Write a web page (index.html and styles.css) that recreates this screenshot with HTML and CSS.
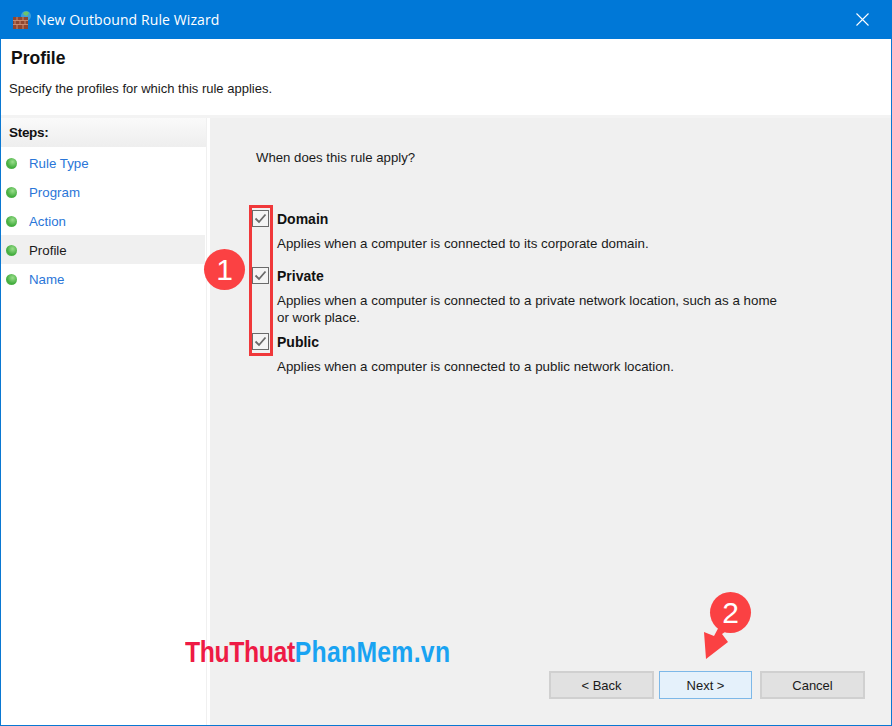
FILE: index.html
```html
<!DOCTYPE html>
<html lang="en">
<head>
<meta charset="utf-8">
<title>New Outbound Rule Wizard</title>
<link rel="stylesheet" href="styles.css">
</head>
<body>
<div class="window">
  <header class="titlebar">
    <svg class="app-icon" width="20" height="20" viewBox="0 0 20 20">
      <circle cx="14" cy="6" r="5" fill="#3f9fd8"/>
      <path d="M11 3c2-2 5-2 6 0l-2 3-3-1z" fill="#6cc46a"/>
      <rect x="1" y="7" width="15" height="12" fill="#8f4630"/>
      <path d="M1 10.5h15M1 14.5h15M5 7v3.500M11 7v3.500M3 10.500v4M8 10.500v4M13 10.500v4M5 14.500v4.500M11 14.500v4.500" stroke="#c98b6f" stroke-width="1" fill="none"/>
    </svg>
    <span class="title-text">New Outbound Rule Wizard</span>
    <svg class="close-icon" width="13" height="13" viewBox="0 0 13 13">
      <path d="M.5.5l12 12M12.500.5l-12 12" stroke="#fff" stroke-width="1.100" fill="none"/>
    </svg>
  </header>
  <section class="page-head">
    <h1 class="page-title">Profile</h1>
    <p class="page-desc">Specify the profiles for which this rule applies.</p>
  </section>
  <div class="content">
    <aside class="steps">
      <div class="steps-head">Steps:</div>
      <ul class="step-list">
        <li class="step"><span class="dot"></span><span class="step-link">Rule Type</span></li>
        <li class="step"><span class="dot"></span><span class="step-link">Program</span></li>
        <li class="step"><span class="dot"></span><span class="step-link">Action</span></li>
        <li class="step step-current"><span class="dot"></span><span>Profile</span></li>
        <li class="step"><span class="dot"></span><span class="step-link">Name</span></li>
      </ul>
    </aside>
    <main class="panel">
      <p class="question">When does this rule apply?</p>
      <div class="options">
        <div class="option opt-domain">
          <span class="check"><svg width="15" height="15" viewBox="0 0 15 15"><path d="M2.500 7.500l3.500 3.500 6.500-7.500" stroke="#6a6a6a" stroke-width="1.800" fill="none"/></svg></span>
          <div class="opt-body">
            <div class="opt-name">Domain</div>
            <div class="opt-desc">Applies when a computer is connected to its corporate domain.</div>
          </div>
        </div>
        <div class="option opt-private">
          <span class="check"><svg width="15" height="15" viewBox="0 0 15 15"><path d="M2.500 7.500l3.500 3.500 6.500-7.500" stroke="#6a6a6a" stroke-width="1.800" fill="none"/></svg></span>
          <div class="opt-body">
            <div class="opt-name">Private</div>
            <div class="opt-desc">Applies when a computer is connected to a private network location, such as a home<br>or work place.</div>
          </div>
        </div>
        <div class="option opt-public">
          <span class="check"><svg width="15" height="15" viewBox="0 0 15 15"><path d="M2.500 7.500l3.500 3.500 6.500-7.500" stroke="#6a6a6a" stroke-width="1.800" fill="none"/></svg></span>
          <div class="opt-body">
            <div class="opt-name">Public</div>
            <div class="opt-desc">Applies when a computer is connected to a public network location.</div>
          </div>
        </div>
      </div>
      <div class="buttons">
        <button class="btn" type="button">&lt; Back</button>
        <button class="btn btn-next" type="button">Next &gt;</button>
        <button class="btn btn-cancel" type="button">Cancel</button>
      </div>
    </main>
  </div>
  <div class="mark-box"></div>
  <div class="badge badge-one">1</div>
  <svg class="arrow" width="50" height="62" viewBox="0 0 50 62"><path d="M2 61L0 34 10 38 25 10 42 20 18 36 24 44z" fill="#fb4143"/></svg>
  <div class="badge badge-two">2</div>
  <div class="watermark"><span class="wm-red">ThuThuat</span><span class="wm-blue">PhanMem.vn</span></div>
</div>
</body>
</html>
```
FILE: styles.css
```css
* { box-sizing: border-box; }
html, body { margin: 0; padding: 0; }
body { width: 892px; height: 726px; overflow: hidden; font-family: "Liberation Sans", Arial, sans-serif; color: #1a1a1a; }
.window { position: relative; width: 892px; height: 726px; display: flex; flex-direction: column; border: 1px solid #0a78d2; border-top: 0; background: #fff; }
.titlebar { height: 39px; flex: none; margin: 0 -1px; padding: 0 23px 0 12px; display: flex; align-items: center; background: #0078d7; color: #fff; }
.app-icon { flex: none; margin-right: 4px; }
.title-text { font-family: "Open Sans", sans-serif; font-size: 14px; letter-spacing: .1px; flex: 1; }
.close-icon { flex: none; }
.page-head { height: 79px; flex: none; padding: 8px 0 0 8px; border-bottom: 3px solid #f3f3f3; }
.page-title { margin: 0 0 0 2px; font-size: 17.500px; line-height: 22px; font-weight: 700; color: #111; }
.page-desc { margin: 11px 0 0; font-size: 13px; line-height: 17px; }
.content { flex: 1; display: flex; min-height: 0; }
.steps { width: 206px; flex: none; border-right: 1px solid #f0f0f0; background: #fff; }
.steps-head { height: 29px; padding: 7px 0 0 8px; font-size: 13.500px; font-weight: 700; line-height: 16px; letter-spacing: -.3px; color: #111; background: linear-gradient(#fafafa, #eeeeee); }
.step-list { margin: 1px 0 0; padding: 0; list-style: none; }
.step { height: 29px; display: flex; align-items: center; padding: 2px 0 0 5px; font-size: 13.300px; }
.step-current { background: #f0f0f0; margin-right: 1px; }
.step-link { color: #2a76d8; }
.dot { width: 11px; height: 11px; margin-right: 12px; border-radius: 50%; flex: none; background: radial-gradient(circle at 60% 35%, #9ade8c, #43ad3e 60%, #6cbb68); }
.panel { flex: 1; margin-left: 3px; position: relative; background: #f0f0f0; display: flex; flex-direction: column; padding: 0 26px 26px 46px; }
.question { margin: 32px 0 0; font-size: 13.200px; line-height: 16px; }
.options { margin-top: 44px; width: 560px; }
.option { display: flex; align-items: flex-start; }
.opt-domain { height: 57px; }
.opt-private { height: 66px; }
.check { width: 17px; height: 17px; margin: 0 8px 0 -4px; flex: none; border: 1.500px solid #6a6a6a; background: #f4f4f4; display: flex; align-items: center; justify-content: center; }
.opt-body { margin-top: 1px; }
.opt-name { font-size: 14px; line-height: 16px; font-weight: 700; color: #111; }
.opt-desc { margin-top: 8px; font-size: 13.350px; line-height: 17px; white-space: nowrap; }
.buttons { margin-top: auto; display: flex; justify-content: flex-end; gap: 5px; }
.btn { width: 105px; height: 28px; padding: 0; font: 13px "Liberation Sans", Arial, sans-serif; color: #1a1a1a; border: 2px solid #d0d0d0; background: #e1e1e1; }
.btn-next { width: 93px; border: 1px solid #7db8e8; background: #e5f1fb; }
.btn-cancel { margin-left: 3px; }
.mark-box { position: absolute; left: 248px; top: 205px; width: 24px; height: 151px; border: 3px solid #f0383a; }
.badge { position: absolute; width: 41px; height: 41px; border-radius: 50%; background: #fb4143; color: #fff; font-size: 30px; line-height: 41px; text-align: center; }
.badge-one { left: 203px; top: 249px; }
.badge-two { left: 709px; top: 592px; }
.arrow { position: absolute; left: 703px; top: 598px; }
.watermark { position: absolute; left: 184px; top: 635px; font-size: 30px; line-height: 34px; font-weight: 700; white-space: nowrap; transform-origin: left center; transform: scaleX(.825); }
.wm-red { color: #ee1b45; letter-spacing: -.45px; }
.wm-blue { color: #19a3f2; letter-spacing: .35px; }
```
